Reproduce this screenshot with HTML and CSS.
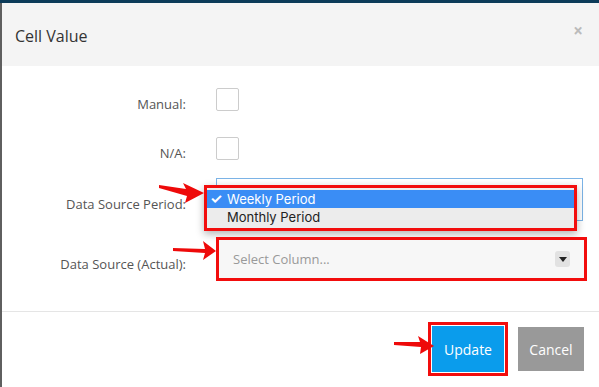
FILE: index.html
```html
<!DOCTYPE html>
<html lang="en">
<head>
    <meta charset="UTF-8">
    <meta name="viewport" content="width=device-width, initial-scale=1.0">
    <title>Cell Value</title>
    <link rel="stylesheet" href="styles.css">
</head>
<body>
    <div class="topbar"></div>
    <div class="page">
        <div class="modal">
            <div class="modal-header">
                <h4 class="modal-title">Cell Value</h4>
                <span class="close">&times;</span>
            </div>

            <div class="modal-body">
                <div class="form-row row-manual">
                    <label>Manual:</label>
                    <div class="control"><span class="checkbox"></span></div>
                </div>

                <div class="form-row row-na">
                    <label>N/A:</label>
                    <div class="control"><span class="checkbox"></span></div>
                </div>

                <div class="form-row row-period">
                    <label>Data Source Period:</label>
                    <div class="control">
                        <div class="select-native"></div>
                        <!-- open dropdown list -->
                        <ul class="option-list">
                            <li class="selected"><span class="tick">&#10003;</span>Weekly Period</li>
                            <li>Monthly Period</li>
                        </ul>
                    </div>
                </div>

                <div class="form-row row-actual">
                    <label>Data Source (Actual):</label>
                    <div class="control">
                        <div class="select2 marked">
                            <span class="placeholder">Select Column...</span>
                            <span class="caret-btn"><span class="caret"></span></span>
                        </div>
                    </div>
                </div>
            </div>

            <div class="modal-footer">
                <button class="btn btn-primary marked-btn">Update</button>
                <button class="btn btn-default">Cancel</button>
            </div>
        </div>
    </div>

    <svg class="arrows" width="599" height="387" viewBox="0 0 599 387">
        <polygon points="159,185 186,189 183,183 204,193 185,203 187,196 159,188" />
        <polygon points="173,248 205,249 203,241 216,251 203,260 205,253 173,251" />
        <polygon points="394,342 420,342 418,336 434,346 420,354 421,347 394,345" />
    </svg>
</body>
</html>
```

FILE: styles.css
```css
:root {
    --primary-color: #0a9cec;
    --mark-color: #f20d0d;
    --text-color: #333;
}

body {
    font-family: "Open Sans", Arial, sans-serif;
    margin: 0;
    width: 599px;
    height: 387px;
    overflow: hidden;
    background: #fff;
    position: relative;
}

.topbar {
    height: 3px;
    background: #0c3b59;
}

.page {
    border-left: 2px solid #5f5f5f;
    height: 384px;
}

.modal-header {
    background: #f4f4f4;
    height: 63px;
    display: flex;
    align-items: center;
    justify-content: space-between;
    padding: 0 16px 0 13px;
}

.modal-title {
    margin: 0;
    font-size: 16px;
    font-weight: normal;
    color: var(--text-color);
    padding-top: 2px;
}

.close {
    color: #bbb;
    font-size: 17px;
    font-weight: bold;
    margin-top: -8px;
}

.modal-body {
    padding: 22px 15px 30px 0;
}

.form-row {
    display: grid;
    grid-template-columns: 184px 1fr;
    column-gap: 30px;
    align-items: center;
}

.form-row label {
    text-align: right;
    font-size: 13px;
    line-height: 13px;
    color: #555;
    padding-top: 10px;
}

.row-na {
    margin-top: 26px;
}

.row-period {
    margin-top: 18px;
}

.row-actual {
    margin-top: 16px;
}

.control {
    position: relative;
}

.checkbox {
    display: block;
    width: 21px;
    height: 21px;
    border: 1px solid #ccc;
    border-radius: 2px;
    background: #fff;
}

.select-native {
    height: 41px;
    margin-right: 1px;
    border: 1px solid #7bb3e6;
    background: #fff;
}

.option-list {
    position: absolute;
    left: -12px;
    top: 7px;
    width: 367px;
    margin: 0;
    padding: 2px 0 2px;
    list-style: none;
    background: #ececec;
    border: 3px solid var(--mark-color);
    box-shadow: 0 3px 8px rgba(0,0,0,0.3);
    font-family: Inter, "Liberation Sans", sans-serif;
    font-size: 13px;
    color: #222;
}

.option-list li {
    height: 18px;
    line-height: 18px;
    padding-left: 20px;
    position: relative;
}

.option-list li.selected {
    background: #3a8df5;
    color: #fff;
}

.tick {
    position: absolute;
    left: 3px;
    font-size: 14px;
    font-weight: bold;
}

.select2 {
    height: 38px;
    display: flex;
    align-items: center;
    justify-content: space-between;
    background: #f7f7f7;
    padding: 0 14px 0 14px;
}

.select2.marked {
    border: 3px solid var(--mark-color);
    margin-right: -3px;
}

.placeholder {
    font-size: 13px;
    color: #999;
}

.caret-btn {
    width: 15px;
    height: 16px;
    background: #e2e2e2;
    border-radius: 3px;
    display: flex;
    align-items: center;
    justify-content: center;
}

.caret {
    width: 0;
    height: 0;
    border-left: 4px solid transparent;
    border-right: 4px solid transparent;
    border-top: 5px solid #222;
}

.modal-footer {
    border-top: 1px solid #e5e5e5;
    display: flex;
    justify-content: flex-end;
    align-items: center;
    gap: 14px;
    padding: 14px 15px 0 0;
}

.btn {
    border: none;
    color: white;
    font-family: "Open Sans", Arial, sans-serif;
    font-size: 14px;
    height: 44px;
    padding: 0;
    cursor: pointer;
}

.btn-primary {
    background: var(--primary-color);
    width: 72px;
    height: 46px;
}

.marked-btn {
    outline: 3px solid var(--mark-color);
    outline-offset: 1px;
}

.btn-default {
    background: #999;
    width: 66px;
}

.arrows {
    position: absolute;
    left: 0;
    top: 0;
    pointer-events: none;
}

.arrows polygon {
    fill: #ee0a0a;
}
```
